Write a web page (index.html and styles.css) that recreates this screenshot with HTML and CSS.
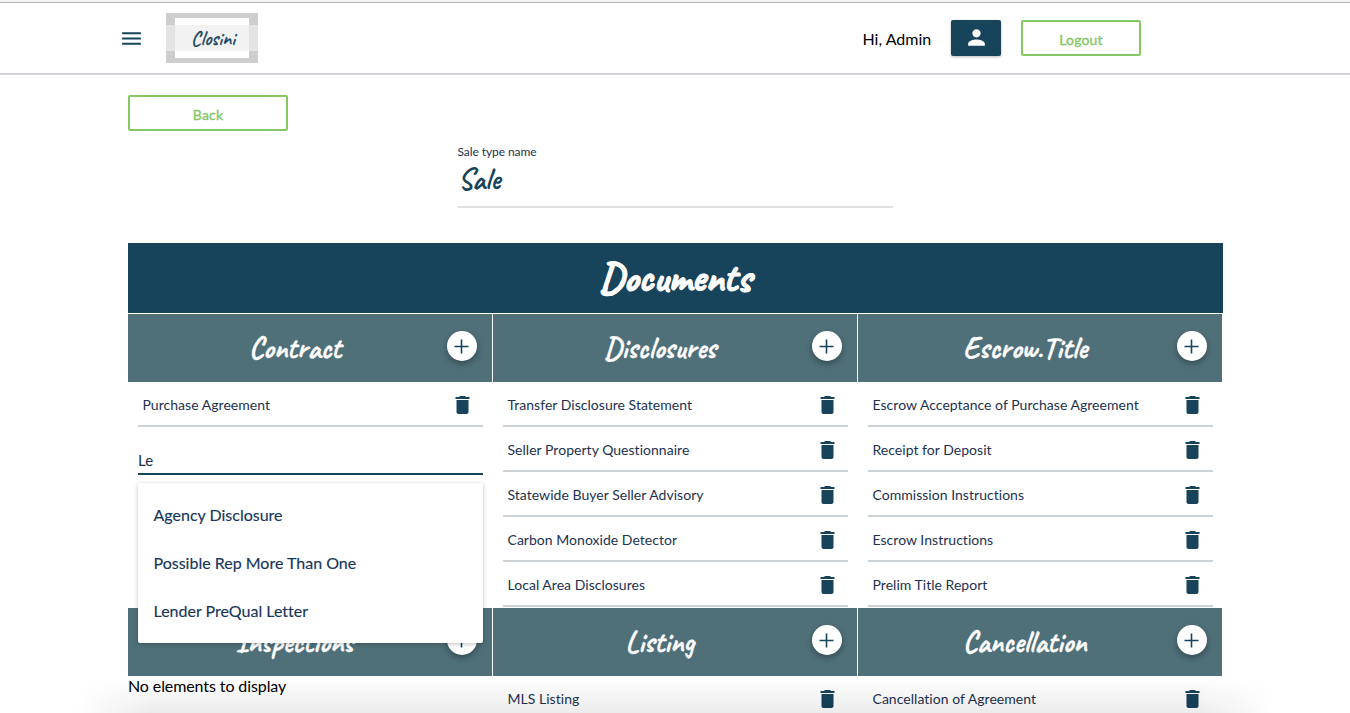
FILE: index.html
```html
<!DOCTYPE html>
<html lang="en">
<head>
<meta charset="utf-8">
<title>Closini</title>
<link rel="stylesheet" href="styles.css">
</head>
<body>
<svg class="defs" aria-hidden="true">
  <symbol id="trash" viewBox="0 0 24 24"><path d="M6 19c0 1.100.9 2 2 2h8c1.100 0 2-.9 2-2V7H6v12zM19 4h-3.500l-1-1h-5l-1 1H5v2h14V4z"/></symbol>
  <symbol id="plus" viewBox="0 0 24 24"><path d="M19 12.800h-6.200v6.200h-1.600v-6.200H5v-1.600h6.200V5h1.600v6.200H19z"/></symbol>
</svg>
<header class="topbar">
  <svg class="menu-icon" viewBox="0 0 24 24"><path d="M3 18h18v-2H3v2zm0-5h18v-2H3v2zm0-7v2h18V6H3z"/></svg>
  <div class="logo"><div class="logo-inner"></div><div class="logo-band"><svg class="script" width="46" height="24"><text x="0" y="19.500" font-size="20" textLength="44" lengthAdjust="spacingAndGlyphs">Closini</text></svg></div></div>
  <span class="greeting">Hi, Admin</span>
  <button class="user-btn"><svg viewBox="0 0 24 24"><path d="M12 12c2.210 0 4-1.790 4-4s-1.790-4-4-4-4 1.790-4 4 1.790 4 4 4zm0 2c-2.670 0-8 1.340-8 4v2h16v-2c0-2.660-5.330-4-8-4z"/></svg></button>
  <button class="outline-btn logout">Logout</button>
</header>
<main class="page">
  <button class="outline-btn back">Back</button>
  <div class="field">
    <label class="field-label">Sale type name</label>
    <svg class="script field-value" width="60" height="34"><text x="0" y="25" font-size="30" textLength="42" lengthAdjust="spacingAndGlyphs">Sale</text></svg>
  </div>
  <div class="title-bar"><svg class="script" width="170" height="60"><text x="6" y="43" font-size="42" textLength="152" lengthAdjust="spacingAndGlyphs">Documents</text></svg></div>
  <div class="grid">
    <section class="cell">
      <div class="cell-head"><svg class="script" width="140" height="50"><text x="24" y="34" font-size="32" textLength="92" lengthAdjust="spacingAndGlyphs">Contract</text></svg><span class="add"><svg><use href="#plus"/></svg></span></div>
      <div class="item"><span>Purchase Agreement</span><svg><use href="#trash"/></svg></div>
      <div class="search"><div class="search-input">Le</div>
        <div class="menu"><div>Agency Disclosure</div><div>Possible Rep More Than One</div><div>Lender PreQual Letter</div></div>
      </div>
    </section>
    <section class="cell">
      <div class="cell-head"><svg class="script" width="140" height="50"><text x="14" y="34" font-size="32" textLength="112" lengthAdjust="spacingAndGlyphs">Disclosures</text></svg><span class="add"><svg><use href="#plus"/></svg></span></div>
      <div class="item"><span>Transfer Disclosure Statement</span><svg><use href="#trash"/></svg></div>
      <div class="item"><span>Seller Property Questionnaire</span><svg><use href="#trash"/></svg></div>
      <div class="item"><span>Statewide Buyer Seller Advisory</span><svg><use href="#trash"/></svg></div>
      <div class="item"><span>Carbon Monoxide Detector</span><svg><use href="#trash"/></svg></div>
      <div class="item"><span>Local Area Disclosures</span><svg><use href="#trash"/></svg></div>
    </section>
    <section class="cell">
      <div class="cell-head"><svg class="script" width="140" height="50"><text x="8" y="34" font-size="32" textLength="124" lengthAdjust="spacingAndGlyphs">Escrow.Title</text></svg><span class="add"><svg><use href="#plus"/></svg></span></div>
      <div class="item"><span>Escrow Acceptance of Purchase Agreement</span><svg><use href="#trash"/></svg></div>
      <div class="item"><span>Receipt for Deposit</span><svg><use href="#trash"/></svg></div>
      <div class="item"><span>Commission Instructions</span><svg><use href="#trash"/></svg></div>
      <div class="item"><span>Escrow Instructions</span><svg><use href="#trash"/></svg></div>
      <div class="item"><span>Prelim Title Report</span><svg><use href="#trash"/></svg></div>
    </section>
    <section class="cell">
      <div class="cell-head"><svg class="script" width="140" height="50"><text x="10.500" y="34" font-size="32" textLength="118" lengthAdjust="spacingAndGlyphs">Inspections</text></svg><span class="add"><svg><use href="#plus"/></svg></span></div>
      <p class="empty">No elements to display</p>
    </section>
    <section class="cell">
      <div class="cell-head"><svg class="script" width="140" height="50"><text x="35.500" y="34" font-size="32" textLength="68.500" lengthAdjust="spacingAndGlyphs">Listing</text></svg><span class="add"><svg><use href="#plus"/></svg></span></div>
      <div class="item"><span>MLS Listing</span><svg><use href="#trash"/></svg></div>
    </section>
    <section class="cell">
      <div class="cell-head"><svg class="script" width="140" height="50"><text x="8" y="34" font-size="32" textLength="123.500" lengthAdjust="spacingAndGlyphs">Cancellation</text></svg><span class="add"><svg><use href="#plus"/></svg></span></div>
      <div class="item"><span>Cancellation of Agreement</span><svg><use href="#trash"/></svg></div>
    </section>
  </div>
</main>
<div class="bottom-shade"></div>
</body>
</html>
```
FILE: styles.css
```css
* { box-sizing: border-box; }
html, body { height: 713px; overflow: hidden; }
body { margin: 0; background: #fff; color: #000; font-family: Lato, sans-serif; font-size: 16px; font-variant-ligatures: none; }
button { font-family: inherit; padding: 0; }
.defs { display: none; }
.script { display: block; overflow: visible; fill: currentColor; font-family: Caveat, "Caveat Brush", Lato, sans-serif; font-weight: 700; }

.topbar { height: 75px; border-bottom: 2px solid #d0d3d7; background: linear-gradient(#f3f3f3 2px, #b4b4b4 2px, #b4b4b4 3px, #fff 3px); display: flex; align-items: flex-start; padding-left: 119px; }
.menu-icon { width: 25px; height: 25px; margin-top: 26px; fill: #17435b; }
.logo { width: 92px; height: 50px; margin: 13px 0 0 22px; background: #cecece; display: grid; }
.logo-inner { grid-area: 1 / 1; margin: 5px 9px; background: #fff; }
.logo-band { grid-area: 1 / 1; margin: 12px 0; height: 26px; color: #17435b; background: linear-gradient(90deg, #e4e4e4 9px, #f2f2f2 9px, #f2f2f2 83px, #e4e4e4 83px); padding-left: 25px; }
.logo-band .script { font-weight: 400; stroke: currentColor; stroke-width: .4px; }
.greeting { margin: 29px 0 0 604.500px; line-height: 19px; width: 70px; white-space: nowrap; }
.user-btn { width: 50px; height: 36px; margin: 20px 0 0 18.500px; border: 0; border-radius: 2px; background: #17435b; box-shadow: 0 1px 3px rgba(0,0,0,.28); }
.user-btn svg { width: 25px; height: 25px; display: block; margin: -2px auto 0; fill: #fff; }
.outline-btn { height: 36px; border: 2px solid #85c665; border-radius: 2px; background: #fff; color: #85c665; font-size: 14px; font-weight: 400; -webkit-text-stroke: .35px #85c665; letter-spacing: .15px; padding-top: 2px; display: block; }
.logout { width: 120px; margin: 20px 0 0 20px; }

.page { width: 1095px; margin-left: 128px; padding-top: 20px; }
.back { width: 160px; }
.field { width: 435px; height: 65px; margin: 12px 0 35px 330px; border-bottom: 2px solid #e0e0e0; color: #17435b; }
.field-label { display: block; font-size: 12px; line-height: 18px; color: #24344f; letter-spacing: -.08px; margin-left: -.5px; }
.field-value { margin-top: 3px; }
.title-bar { height: 70px; background: #17435b; color: #fff; display: flex; justify-content: center; padding-top: 5px; padding-left: 5px; }
.title-bar .script { stroke: #fff; stroke-width: 1.100px; }
.grid { display: grid; grid-template-columns: repeat(3, 365px); grid-template-rows: 294px 140px; }
.cell { padding-top: 1px; }
.cell-head { height: 68px; margin-right: 1px; background: #4f6f79; color: #fff; display: grid; grid-template-columns: 1fr 30px; padding: 17px 15px 0 97px; }
.cell-head .script { margin-top: -7px; stroke: #fff; stroke-width: .3px; }
.add { width: 30px; height: 30px; border-radius: 50%; background: #fff; box-shadow: 0 3px 6px rgba(0,0,0,.32); display: grid; place-items: center; }
.add svg { width: 24px; height: 24px; fill: #17435b; transform: translate(-.5px, .5px); }
.item { height: 45px; margin: 0 10px; padding: 0 8px 0 4.500px; border-bottom: 2px solid #cdd2d6; display: flex; justify-content: space-between; align-items: center; font-size: 14px; color: #1d3250; }
.item span { padding-top: 1px; white-space: nowrap; letter-spacing: .03px; }
.item svg { width: 25px; height: 24px; fill: #17435b; margin-top: 3px; }
.search { position: relative; margin: 0 10px; padding-top: 22px; }
.search-input { height: 26px; border-bottom: 2px solid #17435b; color: #1b2b43; font-size: 15px; line-height: 22px; }
.menu { position: absolute; z-index: 2; top: 56px; left: 0; right: 0; height: 160px; padding: 8px 15.500px; background: #fff; border-radius: 2px; box-shadow: 0 1px 4px rgba(0,0,0,.25); color: #17365a; -webkit-text-stroke: .15px #17365a; }
.menu div { height: 48px; line-height: 47px; }
.empty { margin: 0; line-height: 19px; letter-spacing: -.1px; }
.bottom-shade { position: absolute; left: 0; right: 0; bottom: 0; height: 36px; background: linear-gradient(rgba(0,0,0,0), rgba(0,0,0,.075)); mask-image: linear-gradient(90deg, transparent 75px, #000 150px, #000 1200px, transparent 1275px); }
```
